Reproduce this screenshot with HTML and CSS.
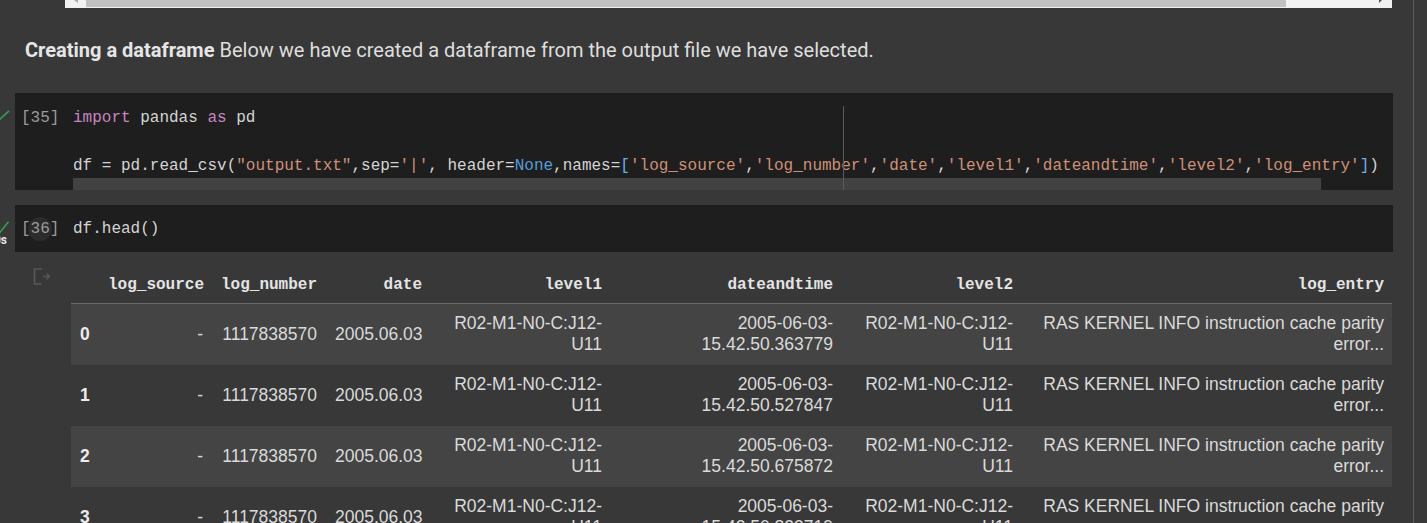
FILE: index.html
```html
<!DOCTYPE html>
<html>
<head>
<meta charset="utf-8">
<title>Notebook</title>
<link rel="stylesheet" href="styles.css">
</head>
<body>
<div class="page">
  <div class="notebook">
    <div class="hscroll">
      <div class="hs-btn"><span class="tri tri-left"></span></div>
      <div class="hs-thumb"></div>
      <div class="hs-rest"><span class="tri tri-right"></span></div>
    </div>

    <p class="md"><b>Creating a dataframe</b> Below we have created a dataframe from the output file we have selected.</p>

    <div class="cell-row cell-row-1">
      <div class="gutter">
        <svg class="check" width="10" height="10" viewBox="0 0 10 10"><path d="M-3 6L0 9.2L9 0.8" fill="none" stroke="#2fa14f" stroke-width="1.6"/></svg>
      </div>
      <div class="cell">
        <div class="prompt">[35]</div>
        <div class="code">
          <div class="line"><span class="kw">import</span> pandas <span class="kw">as</span> pd</div>
          <div class="line"></div>
          <div class="line">df = pd.read_csv(<span class="str">"output.txt"</span>,sep=<span class="str">'|'</span>, header=<span class="const">None</span>,names=<span class="br">[</span><span class="str">'log_source'</span>,<span class="str">'log_number'</span>,<span class="str">'date'</span>,<span class="str">'level1'</span>,<span class="str">'dateandtime'</span>,<span class="str">'level2'</span>,<span class="str">'log_entry'</span><span class="br">]</span>)</div>
          <div class="code-scroll"></div>
        </div>
        <div class="ruler"></div>
      </div>
    </div>

    <div class="cell-row cell-row-2">
      <div class="gutter gutter-2">
        <svg class="check" width="10" height="12" viewBox="0 0 10 12"><path d="M-3 8L0 11.2L8.5 0.8" fill="none" stroke="#2fa14f" stroke-width="1.6"/></svg>
        <span class="status">0s</span>
      </div>
      <div class="cell">
        <div class="prompt prompt-2">[<span class="run">36</span>]</div>
        <div class="code code-2">
          <div class="line">df.head()</div>
        </div>
      </div>
    </div>

    <div class="output">
      <div class="out-gutter">
        <svg width="18" height="17" viewBox="0 0 18 17"><path d="M9 1H1.5v15H9" fill="none" stroke="#575757" stroke-width="1.6"/><path d="M10 8.5h6.5M13.5 5.5l3 3-3 3" fill="none" stroke="#575757" stroke-width="1.4"/></svg>
      </div>
      <table class="df">
        <colgroup>
          <col class="c-idx"><col class="c-src"><col class="c-num"><col class="c-date"><col class="c-lvl"><col class="c-dt"><col class="c-lvl"><col class="c-entry">
        </colgroup>
        <thead>
          <tr><th></th><th>log_source</th><th>log_number</th><th>date</th><th>level1</th><th>dateandtime</th><th>level2</th><th>log_entry</th></tr>
        </thead>
        <tbody>
          <tr><td class="idx">0</td><td>-</td><td>1117838570</td><td>2005.06.03</td><td>R02-M1-N0-C:J12-U11</td><td>2005-06-03-<wbr>15.42.50.363779</td><td>R02-M1-N0-C:J12-U11</td><td>RAS KERNEL INFO instruction cache parity error...</td></tr>
          <tr><td class="idx">1</td><td>-</td><td>1117838570</td><td>2005.06.03</td><td>R02-M1-N0-C:J12-U11</td><td>2005-06-03-<wbr>15.42.50.527847</td><td>R02-M1-N0-C:J12-U11</td><td>RAS KERNEL INFO instruction cache parity error...</td></tr>
          <tr><td class="idx">2</td><td>-</td><td>1117838570</td><td>2005.06.03</td><td>R02-M1-N0-C:J12-U11</td><td>2005-06-03-<wbr>15.42.50.675872</td><td>R02-M1-N0-C:J12-U11</td><td>RAS KERNEL INFO instruction cache parity error...</td></tr>
          <tr><td class="idx">3</td><td>-</td><td>1117838570</td><td>2005.06.03</td><td>R02-M1-N0-C:J12-U11</td><td>2005-06-03-<wbr>15.42.50.823719</td><td>R02-M1-N0-C:J12-U11</td><td>RAS KERNEL INFO instruction cache parity error...</td></tr>
          <tr><td class="idx">4</td><td>-</td><td>1117838570</td><td>2005.06.03</td><td>R02-M1-N0-C:J12-U11</td><td>2005-06-03-<wbr>15.42.50.982731</td><td>R02-M1-N0-C:J12-U11</td><td>RAS KERNEL INFO instruction cache parity error...</td></tr>
        </tbody>
      </table>
    </div>
  </div>
  <div class="rail"></div>
</div>
</body>
</html>
```

FILE: styles.css
```css
html, body {
  margin: 0;
  height: 100%;
}
body {
  background: #383838;
  overflow: hidden;
  font-family: "Liberation Sans", Arial, sans-serif;
}
.page {
  display: flex;
  height: 523px;
}
.notebook {
  width: 1413px;
  flex: none;
}
.rail {
  flex: 1;
  border-left: 1px solid #5b5b5b;
  background: #393939;
}

/* top horizontal scrollbar remnant */
.hscroll {
  margin-left: 65px;
  width: 1327px;
  height: 8px;
  background: #f1f1f1;
  display: flex;
}
.hs-btn {
  width: 21px;
  padding-left: 9px;
  box-sizing: border-box;
}
.hs-thumb {
  width: 1200px;
  height: 7px;
  background: #c1c1c1;
}
.hs-rest {
  flex: 1;
  display: flex;
  justify-content: flex-end;
  padding-right: 10px;
}
.tri {
  display: block;
  width: 0;
  height: 0;
}
.tri-left {
  border-top: 3px solid #a8a8a8;
  border-left: 4px solid transparent;
}
.tri-right {
  border-top: 3px solid #505050;
  border-right: 3px solid transparent;
}

/* markdown text */
.md {
  margin: 30px 0 0 25px;
  font: 20px/24px Roboto, "Liberation Sans", sans-serif;
  color: #dedede;
}
.md b {
  font-weight: 700;
  color: #e6e6e6;
}

/* code cells */
.cell-row {
  display: flex;
}
.cell-row-1 {
  margin-top: 31px;
}
.cell-row-2 {
  margin-top: 15px;
}
.gutter {
  width: 15px;
  flex: none;
  padding-top: 17px;
  box-sizing: border-box;
}
.gutter-2 {
  padding-top: 16px;
  display: flex;
  flex-direction: column;
  align-items: flex-start;
}
.check {
  display: block;
  overflow: visible;
}
.status {
  width: 7px;
  display: flex;
  justify-content: flex-end;
  white-space: nowrap;
  font: 700 12px/14px Roboto, "Liberation Sans", sans-serif;
  color: #e8e8e8;
}
.cell {
  flex: none;
  width: 1378px;
  background: #1e1e1e;
  display: flex;
  position: relative;
}
.prompt {
  flex: none;
  width: 52px;
  padding: 13px 0 0 6px;
  font: 16px/24px "Liberation Mono", monospace;
  color: #9a9a9a;
  position: relative;
  z-index: 0;
}
.prompt-2 {
  padding-top: 12px;
}
.run {
  position: relative;
}
.run::before {
  content: "";
  position: absolute;
  left: 50%;
  top: 50%;
  width: 24px;
  height: 24px;
  margin: -12px 0 0 -12px;
  border-radius: 50%;
  background: #2c2c2c;
  z-index: -1;
}
.code {
  flex: 1;
  min-width: 0;
  padding-top: 13px;
  font: 16px/24px "Liberation Mono", monospace;
  color: #d4d4d4;
}
.code-2 {
  padding: 12px 0 11px;
}
.line {
  height: 24px;
  white-space: pre;
}
.kw { color: #c586c0; }
.str { color: #ce9178; }
.const { color: #569cd6; }
.br { color: #6aaeee; }
.code-scroll {
  width: 1248px;
  height: 12px;
  background: #424242;
}
.ruler {
  position: absolute;
  left: 828px;
  top: 13px;
  bottom: 0;
  width: 1px;
  background: #5a5a5a;
}

/* output */
.output {
  display: flex;
}
.out-gutter {
  width: 71px;
  flex: none;
  padding: 16px 0 0 33px;
  box-sizing: border-box;
}
.out-gutter svg {
  display: block;
}
.df {
  width: 1321px;
  flex: none;
  table-layout: fixed;
  border-collapse: collapse;
  margin-top: 14px;
  font: 17.5px/21px "Liberation Sans", Arial, sans-serif;
  color: #dadada;
}
.c-idx { width: 27px; }
.c-src { width: 113px; }
.c-num { width: 114px; }
.c-date { width: 105px; }
.c-lvl { width: 180px; }
.c-dt { width: 231px; }
.c-entry { width: 371px; }
.df th {
  font: 700 16px/21px "Liberation Mono", monospace;
  color: #e4e4e4;
  text-align: right;
  padding: 9px 8px 7px 10px;
  border-bottom: 1px solid #6a6a6a;
  white-space: nowrap;
}
.df td {
  text-align: right;
  vertical-align: middle;
  padding: 9px 8px 10px 10px;
}
.df td.idx {
  text-align: left;
  font-weight: 700;
  color: #ececec;
  padding-left: 9px;
}
.df tbody tr:nth-child(odd) {
  background: #444444;
}
```
